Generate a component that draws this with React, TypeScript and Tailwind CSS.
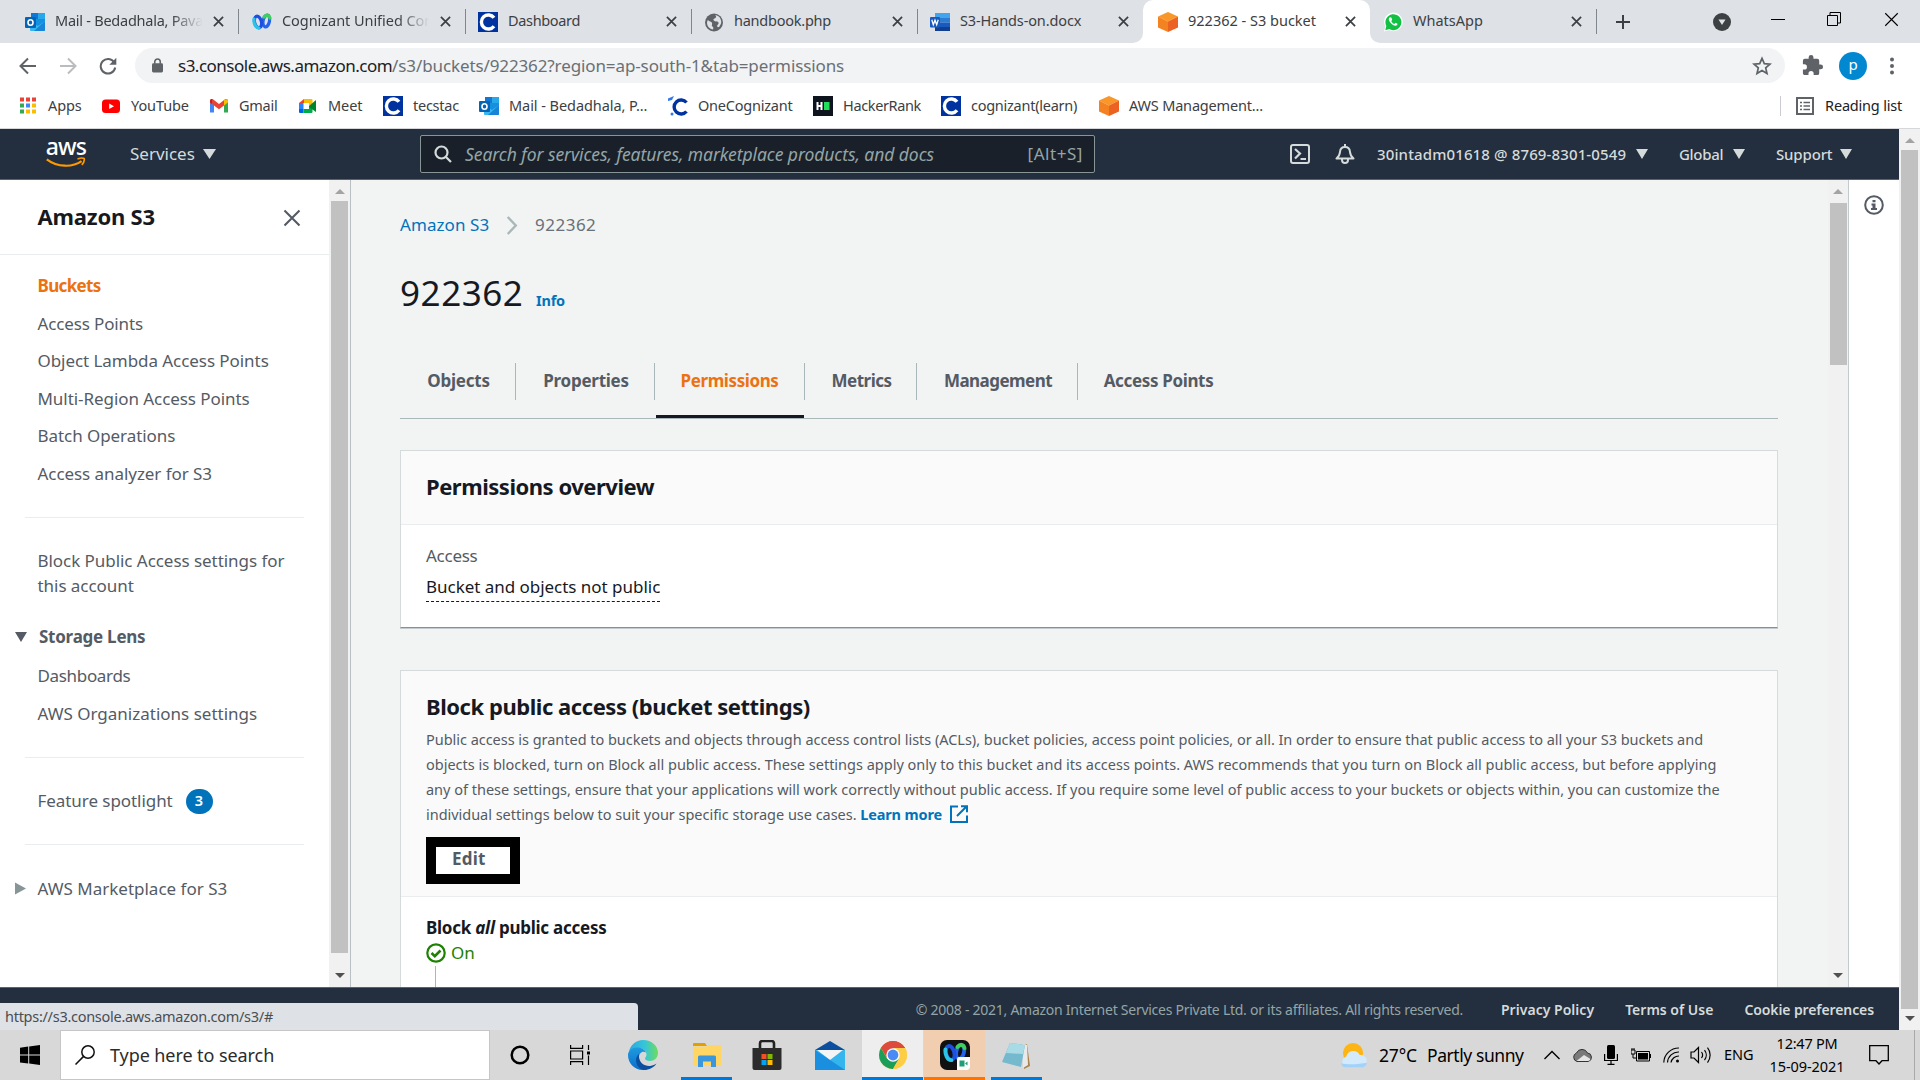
import React from "react";

type Kids = { children?: React.ReactNode };

/* ---------- app icons ---------- */

const Outlook = () => (
  <svg viewBox="0 0 20 20" className="size-5 shrink-0">
    <rect x="6" y="1" width="14" height="16" rx="1" fill="#1490df" />
    <rect x="13" y="1" width="7" height="6" fill="#28a8ea" />
    <rect x="6" y="1" width="7" height="6" fill="#0f78d4" />
    <path d="M5 9l8 5 7-5v9a1 1 0 0 1-1 1H6a1 1 0 0 1-1-1z" fill="#35b8f1" />
    <path d="M20 9v9a1 1 0 0 1-1 1H9z" fill="#1784d9" />
    <rect x="0" y="5" width="11" height="11" rx="1" fill="#0364b8" />
    <ellipse cx="5.5" cy="10.500" rx="2.500" ry="2.800" fill="none" stroke="#fff" strokeWidth="1.600" />
  </svg>
);

const Webex = ({ className = "size-5" }: { className?: string }) => (
  <svg viewBox="0 0 20 20" className={`${className} shrink-0`} fill="none" strokeLinecap="round">
    <ellipse cx="14.300" cy="9" rx="3.200" ry="6" stroke="#2563eb" strokeWidth="3.200" transform="rotate(12 14.300 9)" />
    <path d="M12 5c2-2.500 5-2.300 6 1" stroke="#3ecf5e" strokeWidth="3.200" />
    <ellipse cx="6" cy="10" rx="3.400" ry="6" stroke="#1d4fe0" strokeWidth="3.200" transform="rotate(-14 6 10)" />
    <path d="M2 7c-.5 4 1.500 9 5 9" stroke="#2bc4e8" strokeWidth="3.200" />
  </svg>
);

const CognizantSquare = () => (
  <svg viewBox="0 0 20 20" className="size-5 shrink-0">
    <rect width="20" height="20" fill="#0033a0" />
    <path d="M16 5.800A7 7 0 1 0 16 14.200" fill="none" stroke="#fff" strokeWidth="3.400" />
  </svg>
);

const OneCognizant = () => (
  <svg viewBox="0 0 20 20" className="size-5 shrink-0">
    <path d="M18.500 6.500A7 7 0 1 0 18.500 15.500" fill="none" stroke="#0033a0" strokeWidth="3.400" />
    <path d="M0 2.500L6 0 4 4 0 5z" fill="#2f78f0" />
    <circle cx="4" cy="18" r="1.500" fill="#2f78f0" />
  </svg>
);

const Globe = () => (
  <svg viewBox="0 0 20 20" className="size-5 shrink-0">
    <circle cx="10" cy="10.500" r="9" fill="#5f6368" />
    <path d="M11 3c2 1 1 3-.5 3.500S9 8 10.500 9s3.500 0 4 1.500-1 2-1.500 3.500 2 1.500 2.500.5 1.800-3 1.800-4.500C17 6 14.500 3.300 11 3zM4 8c1 2 3.500 1 4 3s-1 2.500.5 3.500.5 2.500.5 3C5.500 17 3 14 3 11c0-1 .3-2.300 1-3z" fill="#dee1e6" />
  </svg>
);

const Word = () => (
  <svg viewBox="0 0 20 20" className="size-5 shrink-0">
    <rect x="5" y="1" width="15" height="5" fill="#41a5ee" />
    <rect x="5" y="6" width="15" height="4.500" fill="#2b7cd3" />
    <rect x="5" y="10.500" width="15" height="4.500" fill="#185abd" />
    <rect x="5" y="15" width="15" height="4" fill="#103f91" />
    <rect x="0" y="5" width="10" height="10.500" rx="1" fill="#185abd" />
    <path d="M1.800 7.800l1.500 5 1.700-4.600 1.700 4.600 1.500-5" fill="none" stroke="#fff" strokeWidth="1.300" />
  </svg>
);

const Cube = () => (
  <svg viewBox="0 0 20 20" className="size-5 shrink-0">
    <path d="M10 0l10 4.500-10 5L0 4.500z" fill="#f9972a" />
    <path d="M0 4.500l10 5V20L0 15.500z" fill="#f58220" />
    <path d="M20 4.500l-10 5V20l10-4.500z" fill="#ec6223" />
  </svg>
);

const WhatsApp = () => (
  <svg viewBox="0 0 20 20" className="size-5 shrink-0">
    <path d="M1 19.500l1.400-5A9.300 9.300 0 1 1 6 18z" fill="#fff" />
    <path d="M2.300 18.200l1-4.300a8 8 0 1 1 3 3.200z" fill="#12c143" />
    <path d="M7 5.200c-1.500.7-1.600 2.500-.4 4.300 1.400 2.300 3.200 3.900 5.500 4.300 1.300.2 2.500-.9 2.400-2l-2-1.100-1.200 1.200c-1.500-.7-2.500-1.700-3-3l.9-1.200-.9-2.300z" fill="#fff" />
  </svg>
);

const AppsGrid = () => (
  <svg viewBox="0 0 20 20" className="size-5 shrink-0">
    {["#ea4335", "#ea4335", "#ea4335", "#34a853", "#4285f4", "#fbbc04", "#34a853", "#fbbc04", "#fbbc04"].map((c, i) => (
      <rect key={i} x={2 + (i % 3) * 6} y={1.500 + Math.floor(i / 3) * 6} width="4" height="4" fill={c} />
    ))}
  </svg>
);

const YouTube = () => (
  <svg viewBox="0 0 20 20" className="size-5 shrink-0">
    <rect x="1" y="3.500" width="18" height="13.500" rx="3.500" fill="#f00" />
    <path d="M8.200 7.500v5.500l4.800-2.750z" fill="#fff" />
  </svg>
);

const Gmail = () => (
  <svg viewBox="0 0 20 20" className="size-5 shrink-0">
    <path d="M1 5v11.500h4V9z" fill="#4285f4" />
    <path d="M19 5v11.500h-4V9z" fill="#34a853" />
    <path d="M1 5c0-2 2-2.500 3.300-1.500L10 8l5.700-4.500C17 2.500 19 3 19 5v1.500L10 13.200 1 6.500z" fill="#ea4335" />
    <path d="M15 4.200C17 2.500 19 3 19 5v1.500l-4 3z" fill="#fbbc04" />
    <path d="M1 5c0-1.500 1-2 2-2v5L1 6.500z" fill="#c5221f" />
  </svg>
);

const Meet = () => (
  <svg viewBox="0 0 20 20" className="size-5 shrink-0">
    <path d="M6 3v4H1z" fill="#ea4335" />
    <path d="M6 3h7.500a1 1 0 0 1 1 1v4L11 10V7H6z" fill="#fbbc04" />
    <path d="M1 7h4.500v6H1z" fill="#2684fc" />
    <path d="M1 13h4.500v4H2a1 1 0 0 1-1-1z" fill="#0066da" />
    <path d="M5.500 13H11v-3l3.500 2.500V16a1 1 0 0 1-1 1h-8z" fill="#00ac47" />
    <path d="M11 10l7-6v12l-7-5z" fill="#00832d" />
  </svg>
);

const HackerRank = () => (
  <svg viewBox="0 0 20 20" className="size-5 shrink-0">
    <rect width="20" height="20" fill="#0e141e" />
    <path d="M4.500 6v8M8.500 6v8M4 10h5" stroke="#fff" strokeWidth="2" />
    <rect x="11" y="6" width="5.500" height="8" fill="#1ede5c" />
  </svg>
);

const CloseX = ({ className }: { className: string }) => (
  <svg viewBox="0 0 12 12" className={className}>
    <path d="M1 1l10 10M11 1L1 11" stroke="currentColor" fill="none" />
  </svg>
);

const Down = ({ className }: { className: string }) => (
  <svg viewBox="0 0 12 10" preserveAspectRatio="none" className={className}>
    <path d="M0 0h12L6 10z" fill="currentColor" />
  </svg>
);

/* ---------- browser chrome ---------- */

function Tab({ icon, label, fade, sep = true, className = "w-[226px] tracking-[-0.12px]" }: { icon: React.ReactNode; label: string; fade?: boolean; sep?: boolean; className?: string }) {
  return (
    <div className={`flex h-[43px] shrink-0 items-center pl-[25px] text-[14.5px] text-[#3c4043] ${className}`}>
      {icon}
      <span className={`ml-[10px] w-[149px] shrink-0 whitespace-nowrap pb-px ${fade ? "mask-r-from-78% mask-r-to-99%" : ""}`}>{label}</span>
      <CloseX className="ml-[9px] size-[11px] shrink-0 stroke-[1.9] text-[#3c4043]" />
      {sep && <span className="ml-[14px] h-[25px] w-px shrink-0 bg-[#80868b]" />}
    </div>
  );
}

function TabStrip() {
  return (
    <div className="flex h-[43px] items-center bg-[#dee1e6]">
      <Tab icon={<Outlook />} label="Mail - Bedadhala, Pava" fade className="w-[227px] tracking-[-0.25px]" />
      <Tab icon={<Webex />} label="Cognizant Unified Con" fade className="w-[226px] tracking-[-0.05px]" />
      <Tab icon={<CognizantSquare />} label="Dashboard" className="w-[226px] tracking-[-0.34px]" />
      <Tab icon={<Globe />} label="handbook.php" className="w-[226px] tracking-[-0.24px]" />
      <Tab icon={<Word />} label="S3-Hands-on.docx" sep={false} />
      <div className="relative -mr-[12px] ml-[12px] flex h-[43px] w-[227px] items-center rounded-t-[10px] bg-white pl-[12px]">
        <svg viewBox="0 0 10 10" className="absolute -left-[10px] bottom-0 size-[10px]"><path d="M10 0v10H0A10 10 0 0 0 10 0z" fill="#fff" /></svg>
        <svg viewBox="0 0 10 10" className="absolute -right-[10px] bottom-0 size-[10px]"><path d="M0 0v10h10A10 10 0 0 1 0 0z" fill="#fff" /></svg>
        <div className="flex items-center text-[14.5px] text-[#3c4043]">
          <span className="ml-[3px]"><Cube /></span>
          <span className="ml-[10px] w-[150px] whitespace-nowrap pb-px">922362 - S3 bucket</span>
          <CloseX className="ml-[7px] size-[11px] shrink-0 stroke-[1.9] text-[#3c4043]" />
        </div>
      </div>
      <Tab icon={<WhatsApp />} label="WhatsApp" className="w-[226px]" />
      <svg viewBox="0 0 16 16" className="ml-[31px] size-4"><path d="M8 1v14M1 8h14" stroke="#3c4043" strokeWidth="2" /></svg>
      <svg viewBox="0 0 18 18" className="ml-[82px] size-[18px]"><circle cx="9" cy="9" r="9" fill="#3c4043" /><path d="M5.500 6.500h7L9 12z" fill="#dee1e6" /></svg>
      <span className="mb-[5px] ml-[40px] h-px w-[14px] bg-black" />
      <svg viewBox="0 0 14 14" className="mb-[5px] ml-[42px] size-[14px]" fill="none" stroke="#000"><path d="M.5 3.500h10v10H.5zM3 3.500V.5h10.500v10.500H10.500" /></svg>
      <CloseX className="mb-[5px] ml-[43px] size-[15px] stroke-[0.9] text-black" />
    </div>
  );
}

function Toolbar() {
  return (
    <div className="flex h-[45px] items-center bg-white text-[#5f6368]">
      <svg viewBox="0 0 18 18" className="ml-[19px] size-[18px]" fill="none" stroke="#5f6368" strokeWidth="2"><path d="M17 9H2M9 1.500L1.500 9 9 16.500" /></svg>
      <svg viewBox="0 0 18 18" className="ml-[22px] size-[18px]" fill="none" stroke="#babcbe" strokeWidth="2"><path d="M1 9h15M9 1.500L16.500 9 9 16.500" /></svg>
      <svg viewBox="0 0 18 18" className="ml-[22px] size-[18px]"><path d="M15.300 5.500A7.300 7.300 0 1 0 16.200 10.500" fill="none" stroke="#5f6368" strokeWidth="2" /><path d="M17.300.8v7h-7z" fill="#5f6368" /></svg>
      <div className="ml-[18px] flex h-[35px] w-[1650px] items-center rounded-full bg-[#f1f3f4] pl-[17px]">
        <svg viewBox="0 0 12 16" className="h-[15px] w-[11px]"><rect y="5.500" width="12" height="10" rx="1.500" fill="#5f6368" /><path d="M3 6V4a3 3 0 0 1 6 0v2" fill="none" stroke="#5f6368" strokeWidth="1.700" /></svg>
        <span className="ml-[15px] whitespace-nowrap pt-px text-[17px] tracking-[-0.5px] text-[#202124]">s3.console.aws.amazon.com<span className="tracking-[-0.11px] text-[#6b6f74]">/s3/buckets/922362?region=ap-south-1&amp;tab=permissions</span></span>
        <svg viewBox="0 0 20 20" className="ml-auto mr-[13px] size-5"><path d="M10 2.300l2.300 5.300 5.700.5-4.300 3.800 1.300 5.600-5-3-5 3 1.300-5.600L2 8.100l5.700-.5z" fill="none" stroke="#5f6368" strokeWidth="1.700" /></svg>
      </div>
      <svg viewBox="0 0 24 24" className="ml-[16px] size-[23px]" fill="#5f6368"><path d="M20.500 11H19V7a2 2 0 0 0-2-2h-4V3.500a2.500 2.500 0 0 0-5 0V5H4a2 2 0 0 0-2 2v3.800h1.500a2.700 2.700 0 0 1 0 5.400H2V20c0 1.100.9 2 2 2h3.800v-1.500a2.700 2.700 0 0 1 5.400 0V22H17a2 2 0 0 0 2-2v-4h1.500a2.500 2.500 0 0 0 0-5z" /></svg>
      <span className="ml-[15px] flex size-7 items-center justify-center rounded-full bg-[#0288d1] pb-0.5 text-[15px] text-white">p</span>
      <svg viewBox="0 0 4 18" className="ml-[23px] h-[18px] w-1" fill="#5f6368"><circle cx="2" cy="2.500" r="2" /><circle cx="2" cy="9" r="2" /><circle cx="2" cy="15.500" r="2" /></svg>
    </div>
  );
}

function Mark({ icon, label, className }: { icon: React.ReactNode; label: string; className: string }) {
  return (
    <div className={`flex shrink-0 items-center gap-[10px] ${className}`}>
      {icon}
      <span className="whitespace-nowrap">{label}</span>
    </div>
  );
}

function Bookmarks() {
  return (
    <div className="flex h-[41px] items-center border-b border-[#d5d7db] bg-white pb-[5px] pl-[18px] text-[14.5px] text-[#3c4043]">
      <Mark icon={<AppsGrid />} label="Apps" className="w-[83px] tracking-[-0.1px]" />
      <Mark icon={<YouTube />} label="YouTube" className="w-[108px] tracking-[-0.1px]" />
      <Mark icon={<Gmail />} label="Gmail" className="w-[89px] tracking-[-0.25px]" />
      <Mark icon={<Meet />} label="Meet" className="w-[85px] tracking-[-0.1px]" />
      <Mark icon={<CognizantSquare />} label="tecstac" className="w-[96px] tracking-[-0.25px]" />
      <Mark icon={<Outlook />} label="Mail - Bedadhala, P..." className="w-[189px] tracking-[-0.06px]" />
      <Mark icon={<OneCognizant />} label="OneCognizant" className="w-[145px] tracking-[-0.22px]" />
      <Mark icon={<HackerRank />} label="HackerRank" className="w-[128px] tracking-[-0.36px]" />
      <Mark icon={<CognizantSquare />} label="cognizant(learn)" className="w-[158px] tracking-[-0.26px]" />
      <Mark icon={<Cube />} label="AWS Management..." className="w-[200px] tracking-[-0.18px]" />
      <span className="ml-auto h-5 w-px bg-[#c9ccd0]" />
      <svg viewBox="0 0 18 18" className="ml-[15px] size-[18px]" fill="none" stroke="#5f6368"><rect x="1" y="1" width="16" height="16" strokeWidth="2" /><path d="M4 5.500h2M7.500 5.500H14M4 9h2M7.500 9H14M4 12.500h2M7.500 12.500H14" strokeWidth="1.600" /></svg>
      <span className="ml-[11px] mr-[18px] tracking-[-0.2px] text-[#202124]">Reading list</span>
    </div>
  );
}

/* ---------- AWS console ---------- */

function ConsoleHeader() {
  return (
    <header className="flex h-[51px] shrink-0 items-center border-b border-[#5a6470] bg-[#232f3e] text-[15px] text-[#d5dbdb]">
      <div className="ml-[44px] flex w-[44px] flex-col items-center">
        <span className="-mt-[7px] h-[24px] text-[23px] font-medium leading-[26px] tracking-[-0.8px] text-white">aws</span>
        <svg viewBox="0 0 44 12" className="h-[11px] w-[44px]"><path d="M1 2.500c12 9 28 9 38 2" fill="none" stroke="#f90" strokeWidth="2.400" /><path d="M34.500 2.200c3-1.200 6-1.300 7.300-.6.500 2-.7 5-2.600 7" fill="none" stroke="#f90" strokeWidth="1.800" /></svg>
      </div>
      <span className="ml-[42px] w-[65px] text-[17px]">Services</span>
      <Down className="ml-[8px] h-[10px] w-[13px]" />
      <div className="ml-[204px] flex h-[38px] w-[675px] items-center rounded-[2px] border border-[#879596] bg-[#1a2029] text-[#95a5a6]">
        <svg viewBox="0 0 18 18" className="ml-[13px] size-[18px]" fill="none" stroke="#d5dbdb" strokeWidth="2.200"><circle cx="7.500" cy="7.500" r="6" /><path d="M12 12l5 5" /></svg>
        <span className="ml-[13px] whitespace-nowrap text-[17.5px] italic tracking-[-0.07px]">Search for services, features, marketplace products, and docs</span>
        <span className="ml-auto mr-[11px] text-[17px] tracking-[0.55px]">[Alt+S]</span>
      </div>
      <svg viewBox="0 0 20 20" className="ml-[195px] size-5" fill="none" stroke="#d5dbdb" strokeWidth="2"><rect x="1" y="1" width="18" height="18" rx="2" /><path d="M5 5l5 4.500L5 14.500M10.500 15H16" strokeWidth="2.200" /></svg>
      <svg viewBox="0 0 20 20" className="ml-[25px] size-5" fill="none" stroke="#d5dbdb" strokeWidth="2"><path d="M1.500 14.500h17c-3-2.500-3.300-4-3.500-6.500-.2-3-2-5-5-5s-4.800 2-5 5c-.2 2.500-.5 4-3.500 6.500z" strokeLinejoin="round" /><path d="M7 15v1a3 3 0 0 0 6 0v-1M10 0v3" /></svg>
      <span className="ml-[22px] w-[250px] whitespace-nowrap text-[15px] font-medium tracking-[0.13px]">30intadm01618 @ 8769-8301-0549</span>
      <Down className="ml-[9px] h-[10px] w-[12px]" />
      <span className="ml-[31px] w-[45px] font-medium tracking-[-0.3px]">Global</span>
      <Down className="ml-[9px] h-[10px] w-[12px]" />
      <span className="ml-[31px] w-[56px] font-medium tracking-[-0.15px]">Support</span>
      <Down className="ml-[8px] h-[10px] w-[12px]" />
    </header>
  );
}

const Hr = ({ className }: { className: string }) => <div className={`ml-[25px] mr-[25px] h-px shrink-0 bg-[#eaeded] ${className}`} />;

const Link = ({ children, className = "tracking-[-0.06px]" }: Kids & { className?: string }) => (
  <div className={`flex h-[37.5px] shrink-0 items-center whitespace-nowrap pl-[37.5px] ${className}`}>{children}</div>
);

function ScrollBar({ children, className, tail }: Kids & { className: string; tail: string }) {
  return (
    <div className={`flex shrink-0 flex-col items-center bg-[#f1f1f1] ${className}`}>
      <svg viewBox="0 0 10 5" className="mb-[7px] mt-[9px] h-[5px] w-[10px]"><path d="M5 0l5 5H0z" fill="#a3a3a3" /></svg>
      {children}
      <svg viewBox="0 0 10 5" className={`mt-auto h-[5px] w-[10px] ${tail}`}><path d="M0 0h10L5 5z" fill="#505050" /></svg>
    </div>
  );
}

function Sidebar() {
  return (
    <aside className="flex h-full w-[329px] shrink-0 flex-col bg-white text-[17px] text-[#545b64]">
      <div className="flex h-[75px] shrink-0 items-center justify-between border-b border-[#eaeded] pl-[37.5px] pr-[28px]">
        <span className="pb-[2px] text-[22px] font-bold tracking-[-0.2px] text-[#16191f]">Amazon S3</span>
        <CloseX className="mt-px size-[18px] stroke-[1.4] text-[#545b64]" />
      </div>
      <Link className="mt-[12px] font-bold tracking-[-0.65px] text-[#ec7211]">Buckets</Link>
      <Link className="tracking-[-0.14px]">Access Points</Link>
      <Link>Object Lambda Access Points</Link>
      <Link>Multi-Region Access Points</Link>
      <Link>Batch Operations</Link>
      <Link>Access analyzer for S3</Link>
      <Hr className="mt-[25px]" />
      <div className="mt-[30px] whitespace-nowrap pl-[37.5px] leading-[25px] tracking-[-0.05px]">Block Public Access settings for<br />this account</div>
      <div className="mt-[20px] flex h-[37.5px] shrink-0 items-center pl-[15px] font-bold tracking-[-0.25px]">
        <Down className="mr-[12px] h-[10px] w-[12px]" />Storage Lens
      </div>
      <Link className="mt-[1.5px] tracking-[-0.33px]">Dashboards</Link>
      <Link className="tracking-[0px]">AWS Organizations settings</Link>
      <Hr className="mt-[25px]" />
      <div className="mt-[28px] flex h-[30px] shrink-0 items-center whitespace-nowrap pl-[37.5px]">
        <span className="w-[135px] tracking-[-0.06px]">Feature spotlight</span>
        <span className="ml-[13px] flex h-[25px] w-[27px] items-center justify-center rounded-full bg-[#0073bb] text-[14.5px] font-semibold text-white">3</span>
      </div>
      <Hr className="mt-[28px]" />
      <div className="mt-[25px] flex h-[37.5px] shrink-0 items-center whitespace-nowrap pl-[15px]">
        <svg viewBox="0 0 11 12" className="mr-[11.5px] h-[13px] w-[11px]"><path d="M0 0l11 6-11 6z" fill="#879596" /></svg>AWS Marketplace for S3
      </div>
    </aside>
  );
}

function Content() {
  const tab = "flex h-[37px] items-center justify-center border-r border-[#aab7b8] pb-[2px] pl-[2px]";
  return (
    <main className="h-full w-[1477px] shrink-0 overflow-hidden bg-[#f2f3f3] pl-[49px] pr-[50px] text-[17px] text-[#16191f]">
      <div className="mt-[32px] flex h-[26px] items-center">
        <span className="w-[90px] tracking-[0.08px] text-[#0073bb]">Amazon S3</span>
        <svg viewBox="0 0 12 20" className="ml-[16px] h-[19px] w-[12px]"><path d="M1.500 1l8.500 9-8.500 9" fill="none" stroke="#aab7b8" strokeWidth="2.500" /></svg>
        <span className="ml-[17px] tracking-[0.5px] text-[#687078]">922362</span>
      </div>
      <div className="mt-[28px] flex h-[54px] items-baseline">
        <h1 className="w-[123px] text-[35px] leading-[54px] tracking-[0.55px]">922362</h1>
        <span className="ml-[13px] text-[14.500px] font-bold tracking-[-0.2px] text-[#0073bb]">Info</span>
      </div>
      <div className="mt-[43px] flex h-[56px] border-b border-[#aab7b8] font-bold text-[#545b64]">
        <div className={`${tab} w-[116px] tracking-[-0.2px]`}>Objects</div>
        <div className={`${tab} w-[139px] tracking-[-0.25px]`}>Properties</div>
        <div className="flex h-[56px] w-[150px] flex-col text-[#ec7211]">
          <div className="flex h-[37px] w-[150px] items-center justify-center border-r border-[#aab7b8] pb-[2px] tracking-[-0.4px]">Permissions</div>
          <div className="mb-px ml-px mr-px mt-auto h-[3px] bg-[#16191f]" />
        </div>
        <div className={`${tab} w-[112px] tracking-[-0.5px]`}>Metrics</div>
        <div className={`${tab} w-[161px] tracking-[-0.55px]`}>Management</div>
        <div className="flex h-[37px] w-[161px] items-center justify-center pb-[2px] tracking-[-0.35px]">Access Points</div>
      </div>

      <section className="mt-[31px] h-[178px] border border-[#d5dbdb] border-b-[#879196] bg-white shadow-[0_1px_0_#c3cacd]">
        <h2 className="flex h-[74px] items-center border-b border-[#eaeded] bg-[#fafafa] pb-[3px] pl-[25px] text-[22px] font-bold tracking-[-0.48px]">Permissions overview</h2>
        <div className="pl-[25px] leading-[25px]">
          <div className="mt-[18px] tracking-[-0.26px] text-[#545b64]">Access</div>
          <span className="mt-[6px] inline-block h-[28px] border-b border-dashed border-[#16191f] tracking-[-0.03px]">Bucket and objects not public</span>
        </div>
      </section>

      <section className="mt-[42px] h-[400px] border border-[#d5dbdb] bg-white">
        <div className="h-[226px] border-b border-[#eaeded] bg-[#fafafa] pl-[25px]">
          <h2 className="flex h-[54px] items-end text-[22px] font-bold leading-[38px] tracking-[-0.45px]">Block public access (bucket settings)</h2>
          <p className="mt-[2px] whitespace-nowrap text-[14.5px] leading-[25px] tracking-[-0.01px] text-[#545b64]">
            <span className="tracking-[-0.03px]">Public access is granted to buckets and objects through access control lists (ACLs), bucket policies, access point policies, or all. In order to ensure that public access to all your S3 buckets and</span><br />
            <span className="tracking-[-0.003px]">objects is blocked, turn on Block all public access. These settings apply only to this bucket and its access points. AWS recommends that you turn on Block all public access, but before applying</span><br />
            any of these settings, ensure that your applications will work correctly without public access. If you require some level of public access to your buckets or objects within, you can customize the<br />
            <span className="tracking-[-0.03px]">individual settings below to suit your specific storage use cases.</span> <span className="font-bold tracking-[-0.15px] text-[#0073bb]">Learn more</span>
            <svg viewBox="0 0 18 18" className="ml-[8px] inline-block size-[18px] align-[-3px]" fill="none" stroke="#0073bb" strokeWidth="2"><path d="M8 1.500H1v15.500h16V10.500M11 1.200h6v6M17 1L7 11" /></svg>
          </p>
          <div className="mt-[10px] flex h-[47px] w-[94px] items-center border-[10px] border-black bg-white pb-[3px] pl-4 font-bold tracking-[0.2px] text-[#545b64]">Edit</div>
        </div>
        <div className="pl-[25px] leading-[25px]">
          <div className="mt-[18px] font-bold tracking-[-0.25px]">Block <em>all</em> public access</div>
          <div className="flex items-center text-[#1d8102]">
            <svg viewBox="0 0 20 20" className="mr-[5px] size-5" fill="none" stroke="#1d8102"><circle cx="10" cy="10" r="8.700" strokeWidth="2.200" /><path d="M5.500 10l3.300 3.200L14.500 7.500" strokeWidth="2.600" /></svg>On
          </div>
          <div className="ml-[9px] mt-[1px] h-[40px] w-px bg-[#aab7b8]" />
        </div>
      </section>
    </main>
  );
}

function Footer() {
  return (
    <footer className="relative flex h-[43px] shrink-0 items-center justify-end border-t border-[#5a6470] bg-[#232f3e] pr-[25px] pt-px text-[14px] text-[#d5dbdb]">
      <span className="mr-[38px] tracking-[-0.26px] text-[#95a5a6]">© 2008 - 2021, Amazon Internet Services Private Ltd. or its affiliates. All rights reserved.</span>
      <span className="mr-[31px] font-semibold tracking-[0.03px]">Privacy Policy</span>
      <span className="mr-[31px] font-semibold">Terms of Use</span>
      <span className="font-semibold tracking-[-0.1px]">Cookie preferences</span>
      <div className="absolute bottom-0 left-0 flex h-[27px] w-[638px] items-center rounded-tr-[4px] bg-[#dee1e6] pl-[5px] text-[14.5px] tracking-[-0.28px] text-[#4a4e52]">https://s3.console.aws.amazon.com/s3/#</div>
    </footer>
  );
}

/* ---------- Windows taskbar ---------- */

function Cell({ children, className }: Kids & { className: string }) {
  return <div className={`flex h-[50px] shrink-0 items-center justify-center ${className}`}>{children}</div>;
}

function Taskbar() {
  return (
    <div className="flex h-[50px] shrink-0 items-center bg-[#d8d8d8] text-[14.5px] text-black">
      <Cell className="w-[60px]">
        <svg viewBox="0 0 20 20" className="size-5"><path d="M0 2.800L8.200 1.600v8H0zM9.200 1.500L20 0v9.600H9.200zM0 10.500h8.200v8L0 17.400zM9.200 10.500H20V20L9.200 18.500z" /></svg>
      </Cell>
      <div className="flex h-[50px] w-[430px] shrink-0 items-center border border-[#c6c6c6] bg-white text-[18px] text-[#2b2b2b]">
        <svg viewBox="0 0 20 20" className="ml-[14px] size-5" fill="none" stroke="#111" strokeWidth="1.500"><circle cx="13" cy="7" r="6.200" /><path d="M8.600 11.400L.5 19.500" /></svg>
        <span className="ml-[15px] tracking-[-0.08px]">Type here to search</span>
      </div>
      <Cell className="w-[60px]"><svg viewBox="0 0 20 20" className="size-5"><circle cx="10" cy="10" r="8.300" fill="none" stroke="#000" strokeWidth="2.500" /></svg></Cell>
      <Cell className="w-[60px]"><svg viewBox="0 0 20 20" className="size-5" fill="none" stroke="#000" strokeWidth="1.200"><path d="M.6 0v3.400h12V0M.6 20v-3.400h12V20M.6 6h12v8H.6zM18.500 0v5M18.500 10.500V20" /><path d="M17 6.500h3v3h-3z" fill="#000" stroke="none" /></svg></Cell>
      <Cell className="w-[66px]">
        <svg viewBox="0 0 30 30" className="size-[30px]">
          <defs>
            <linearGradient id="eg" x1="0" x2="1"><stop offset="0" stopColor="#2aa9e0" /><stop offset=".55" stopColor="#36c6d8" /><stop offset="1" stopColor="#6fdc5a" /></linearGradient>
            <linearGradient id="eb" x1="0" x2="0" y1="0" y2="1"><stop offset="0" stopColor="#1f9ae0" /><stop offset="1" stopColor="#0a6fcb" /></linearGradient>
          </defs>
          <path d="M1 12C2 5 8 0 15 0c9 0 15 6 15 13 0 5-4 8-8 8-3 0-5-1-5-2.500 0-1 1.500-1.500 1.500-4C18.500 11 15 8 10.500 8 6 8 2 10 1 12z" fill="url(#eg)" />
          <path d="M0 15c0-5 5-8 10-7.500 4 .3 7 2.500 8 5-4-2-7 1-7 5 0 6 5 10 9 11-2 1-4 1.500-5 1.500C6 30 0 23 0 15z" fill="url(#eb)" />
          <path d="M11 14c-1 9 6 12.500 11 12 3-.3 5-1.500 6.500-2.500C26 27.500 21 30 16 30 9 29 5 19 11 14z" fill="#0c4f9e" />
        </svg>
      </Cell>
      <Cell className="ml-[5px] w-[51px] border-b-[3px] border-[#0078d7]">
        <svg viewBox="0 0 28 26" className="mt-[2px] h-[26px] w-[28px]"><path d="M0 2a1 1 0 0 1 1-1h11l2 3H0z" fill="#e0a100" /><path d="M0 4.500h13L15 3h12a1 1 0 0 1 1 1v20H1a1 1 0 0 1-1-1z" fill="#ffd564" /><path d="M5 25V15a1.500 1.500 0 0 1 1.500-1.500h15A1.500 1.500 0 0 1 23 15v10h-5v-5.500h-8V25z" fill="#3a96dd" /></svg>
      </Cell>
      <Cell className="ml-[4px] w-[61px]">
        <svg viewBox="0 0 30 30" className="size-[30px]"><path d="M8 9V3.500A2.500 2.500 0 0 1 10.500 1h9A2.500 2.500 0 0 1 22 3.500V9" fill="none" stroke="#222" strokeWidth="2.600" /><path d="M.5 8h29v20a2 2 0 0 1-2 2h-25a2 2 0 0 1-2-2z" fill="#2c2c2c" /><path d="M9.500 14h5v5h-5z" fill="#f25022" /><path d="M15.500 14h5v5h-5z" fill="#7fba00" /><path d="M9.500 20h5v5h-5z" fill="#00a4ef" /><path d="M15.500 20h5v5h-5z" fill="#ffb900" /></svg>
      </Cell>
      <Cell className="ml-[2px] w-[61px]">
        <svg viewBox="0 0 30 30" className="size-[30px]"><path d="M0 10L15 1l15 9z" fill="#0b4f9e" /><path d="M0 10h30v20H0z" fill="#35b5ee" /><path d="M2 10h26L15 20z" fill="#f4f4f4" /><path d="M0 10l30 20H0z" fill="#1a8fdf" /></svg>
      </Cell>
      <Cell className="ml-[2px] w-[61px] border-b-[3px] border-[#0078d7] bg-[#eeeeee]">
        <svg viewBox="0 0 28 28" className="mt-[3px] size-[28px]"><circle cx="14" cy="14" r="14" fill="#fc4" /><path d="M14 14L1.900 7A14 14 0 0 1 26.100 7z" fill="#dd4b3e" /><path d="M14 7h12.100A14 14 0 0 0 1.900 7L8 17z" fill="#dd4b3e" /><path d="M1.900 7A14 14 0 0 0 14 28l6-10.500-12 0z" fill="#1a9e58" /><path d="M20 17.500L14 28A14 14 0 0 0 26.100 7H14z" fill="#fdce45" /><circle cx="14" cy="14" r="6.700" fill="#fff" /><circle cx="14" cy="14" r="5.400" fill="#4a8af4" /></svg>
      </Cell>
      <Cell className="ml-px w-[61px] border-b-[3px] border-[#ff7400] bg-[#f2ceb1]">
        <div className="relative mt-[3px] flex size-[30px] items-center justify-center rounded-[7px] bg-[#111]">
          <Webex className="mb-[4px] size-[24px]" />
          <svg viewBox="0 0 13 13" className="absolute bottom-0 right-0 size-[13px]"><path d="M2 0h11v9a4 4 0 0 1-4 4H0V2a2 2 0 0 1 2-2z" fill="#fff" /><path d="M2.500 3.500h5v6h-5zM8 6.500l2.500-2v4z" fill="#1f9d74" /></svg>
        </div>
      </Cell>
      <Cell className="ml-[6px] w-[51px] border-b-[3px] border-[#0078d7]">
        <svg viewBox="0 0 28 28" className="mr-[2px] mt-[3px] size-[28px]"><path d="M22 4l3-1 3 22-6 3z" fill="#a8824a" /><path d="M21 3l4 1 1 20-5 3z" fill="#e9e9e9" /><path d="M8 2l15 2-4 22L0 21z" fill="#74b9cd" /><path d="M8 2l15 2-2 9L4 12z" fill="#a9dbe6" /></svg>
      </Cell>
      <svg viewBox="0 0 28 26" className="ml-[298px] h-[25px] w-[28px] shrink-0"><circle cx="13" cy="10.500" r="10.500" fill="#fdb515" /><path d="M6.500 25.500a6 6 0 0 1-.5-11.500 7.500 7.500 0 0 1 14-1.500 6.500 6.500 0 0 1 1.500 13z" fill="#d3eafc" /><path d="M6.500 25.500a6 6 0 0 1-6-4.500C8 23 20 22 27.500 20.500a6.500 6.500 0 0 1-6 5z" fill="#a3d2f8" /></svg>
      <span className="ml-[11px] w-[38px] shrink-0 text-[17.5px] tracking-[-0.14px]">27°C</span>
      <span className="ml-[10px] w-[96px] shrink-0 whitespace-nowrap text-[17.5px] tracking-[-0.43px]">Partly sunny</span>
      <svg viewBox="0 0 16 10" className="ml-[21px] h-[10px] w-[16px]" fill="none" stroke="#000" strokeWidth="1.400"><path d="M.5 9L8 1.500 15.500 9" /></svg>
      <svg viewBox="0 0 20 14" className="ml-[12px] h-[14px] w-[20px]"><path d="M5 13.500a4.500 4.500 0 0 1-.5-8.500A6 6 0 0 1 15.500 5a4.300 4.300 0 0 1 .5 8.500z" fill="#7a7a7a" stroke="#333" /><path d="M4.500 13L12 7l6.500 4a3 3 0 0 1-2.500 2z" fill="#e6e6e6" /></svg>
      <svg viewBox="0 0 14 20" className="ml-[12px] h-[20px] w-[14px]"><rect x="3" width="8" height="14" rx="1.500" /><path d="M.6 9v6.500h12.800V9M7 15.500V19M3.500 19.300h7" fill="none" stroke="#000" strokeWidth="1.200" /></svg>
      <svg viewBox="0 0 20 14" className="ml-[13px] h-[14px] w-[20px]"><path d="M0 2h4v4H0zM1 0v2M3 0v2M2 6v4h3" fill="none" stroke="#000" /><path d="M5.500 3.500h13v9.500h-13z" fill="none" stroke="#000" /><path d="M7 5h10v6.500H7zM19 6h1v4h-1z" /></svg>
      <svg viewBox="0 0 18 16" className="ml-[12px] h-[16px] w-[18px]" fill="none" stroke="#000" strokeWidth="1.200"><path d="M.8 15.500A15 15 0 0 1 16 1M4.500 15.500A11 11 0 0 1 16 5M8 15.500A8 8 0 0 1 16 9" /><circle cx="14.500" cy="14" r="1.500" fill="#000" stroke="none" /></svg>
      <svg viewBox="0 0 22 18" className="ml-[9px] h-[18px] w-[22px]" fill="none" stroke="#000" strokeWidth="1.200"><path d="M1 6v6h3l4.500 4.500v-15L4 6zM11.500 6a5 5 0 0 1 0 6M14.500 4a8 8 0 0 1 0 10M17.500 1.500a12 12 0 0 1 0 15" /></svg>
      <span className="ml-[12px] w-[29px]">ENG</span>
      <div className="ml-[16px] flex w-[76px] flex-col items-center whitespace-nowrap leading-[23px] tracking-[-0.25px]">
        <span>12:47 PM</span>
        <span className="tracking-[-0.07px]">15-09-2021</span>
      </div>
      <svg viewBox="0 0 20 20" className="ml-[24px] size-5" fill="none" stroke="#000" strokeWidth="1.300"><path d="M.7.700h18.600v15h-6.300L10 19l-3-3.300H.7z" /></svg>
      <span className="ml-auto mr-[5px] h-full w-px bg-[#a8a8a8]" />
    </div>
  );
}

export default function App() {
  return (
    <div className="flex h-[1080px] w-[1920px] flex-col overflow-hidden bg-white font-['Noto_Sans','Open_Sans',sans-serif]">
      <TabStrip />
      <Toolbar />
      <Bookmarks />
      <div className="flex h-[901px] shrink-0">
        <div className="flex w-[1899px] shrink-0 flex-col">
          <ConsoleHeader />
          <div className="flex h-[807px] shrink-0 overflow-hidden">
            <Sidebar />
            <ScrollBar className="w-[21px]" tail="mb-[9px]"><span className="h-[752px] w-[17px] bg-[#c1c1c1]" /></ScrollBar>
            <span className="w-px shrink-0 bg-[#b9c0c4]" />
            <Content />
            <ScrollBar className="w-[20px]" tail="mb-[9px]"><span className="mt-[2px] h-[162px] w-[17px] bg-[#c1c1c1]" /></ScrollBar>
            <div className="flex flex-1 justify-center border-l border-[#c3cacb] bg-white pt-[15px]">
              <svg viewBox="0 0 20 20" className="size-5"><circle cx="10" cy="10" r="8.800" fill="none" stroke="#545b64" strokeWidth="2" /><path d="M8.500 5h3v2.200h-3zM7.500 8.500h4v4.500h1.500v2h-6v-2h1.500v-2.500h-1z" fill="#545b64" /></svg>
            </div>
          </div>
          <Footer />
        </div>
        <ScrollBar className="w-[21px]" tail="mb-[9px]"><span className="h-[859px] w-[17px] bg-[#c1c1c1]" /></ScrollBar>
      </div>
      <Taskbar />
    </div>
  );
}
